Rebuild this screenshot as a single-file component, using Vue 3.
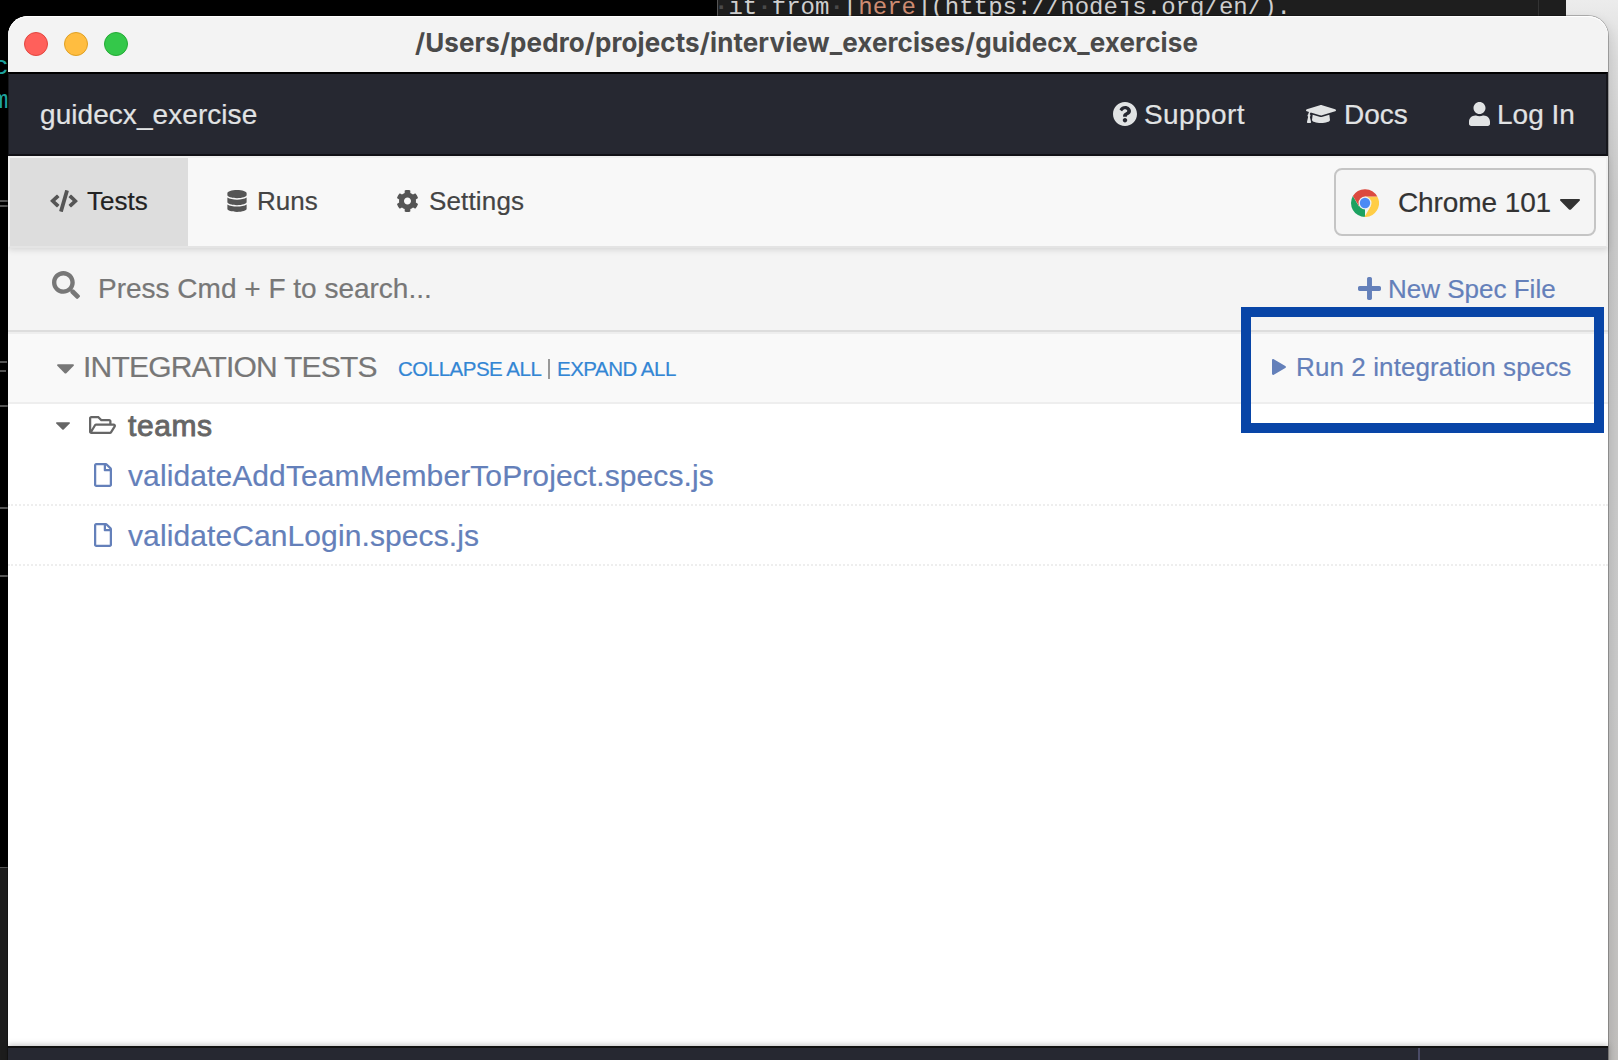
<script setup>
const icons = {
  help: { box: '8 8 496 496', d: 'M504 256c0 136.997-111.043 248-248 248S8 392.997 8 256C8 119.083 119.043 8 256 8s248 111.083 248 248zM262.655 90c-54.497 0-89.255 22.957-116.549 63.758-3.536 5.286-2.353 12.415 2.715 16.258l34.699 26.31c5.205 3.947 12.621 3.008 16.665-2.122 17.864-22.658 30.113-35.797 57.303-35.797 20.429 0 45.698 13.148 45.698 32.958 0 14.976-12.363 22.667-32.534 33.976C247.128 238.528 216 254.941 216 296v4c0 6.627 5.373 12 12 12h56c6.627 0 12-5.373 12-12v-1.333c0-28.462 83.186-29.647 83.186-106.667 0-58.002-60.165-102-116.531-102zM256 338c-25.365 0-46 20.635-46 46 0 25.364 20.635 46 46 46s46-20.636 46-46c0-25.365-20.635-46-46-46z' },
  cap: { box: '0 64 640 384', d: 'M622.34 153.2L343.4 67.5c-15.2-4.67-31.6-4.67-46.79 0L17.66 153.2c-23.54 7.23-23.54 38.36 0 45.59l48.63 14.94c-10.67 13.19-17.23 29.28-17.88 46.9C38.78 266.15 32 276.11 32 288c0 10.78 5.68 19.85 13.86 25.65L20.33 428.53C18.11 438.52 25.71 448 35.94 448h56.11c10.24 0 17.84-9.48 15.62-19.47L82.14 313.65C90.32 307.85 96 298.78 96 288c0-11.57-6.47-21.25-15.66-26.87.76-15.02 8.44-28.3 20.69-36.72L296.6 284.5c9.06 2.78 26.44 6.25 46.79 0l278.95-85.7c23.55-7.24 23.55-38.36 0-45.6zM352.79 315.09c-28.53 8.76-52.84 3.92-65.59 0l-145.02-44.55L128 384c0 35.35 85.96 64 192 64s192-28.65 192-64l-14.18-113.47-145.03 44.56z' },
  user: { box: '0 0 448 512', d: 'M224 256c70.7 0 128-57.3 128-128S294.7 0 224 0 96 57.3 96 128s57.3 128 128 128zm89.6 32h-16.7c-22.2 10.2-46.9 16-72.9 16s-50.6-5.8-72.9-16h-16.7C60.2 288 0 348.2 0 422.4V464c0 26.5 21.5 48 48 48h352c26.5 0 48-21.5 48-48v-41.6c0-74.2-60.2-134.4-134.4-134.4z' },
  code: { box: '0 0 640 512', d: 'M278.9 511.5l-61-17.7c-6.4-1.8-10-8.5-8.2-14.9L346.2 8.7c1.8-6.4 8.5-10 14.9-8.2l61 17.7c6.4 1.8 10 8.5 8.2 14.9L293.8 503.3c-1.9 6.4-8.5 10.1-14.9 8.2zm-114-112.2l43.5-46.4c4.6-4.9 4.3-12.7-.8-17.2L117 256l90.6-79.7c5.1-4.5 5.5-12.3.8-17.2l-43.5-46.4c-4.5-4.8-12.1-5.1-17-.5L3.8 247.2c-5.1 4.7-5.1 12.8 0 17.5l144.1 135.1c4.9 4.6 12.5 4.4 17-.5zm327.2.6l144.1-135.1c5.1-4.7 5.1-12.8 0-17.5L492.1 112.1c-4.8-4.5-12.4-4.3-17 .5L431.6 159c-4.6 4.9-4.3 12.7.8 17.2L523 256l-90.6 79.7c-5.1 4.5-5.5 12.3-.8 17.2l43.5 46.4c4.5 4.9 12.1 5.1 17 .6z' },
  database: { box: '0 0 448 512', d: 'M448 73.143v45.714C448 159.143 347.667 192 224 192S0 159.143 0 118.857V73.143C0 32.857 100.333 0 224 0s224 32.857 224 73.143zM448 176v102.857C448 319.143 347.667 352 224 352S0 319.143 0 278.857V176c48.125 33.143 136.208 48.572 224 48.572S399.874 209.143 448 176zm0 160v102.857C448 479.143 347.667 512 224 512S0 479.143 0 438.857V336c48.125 33.143 136.208 48.572 224 48.572S399.874 369.143 448 336z' },
  cog: { box: '18 8 476 496', d: 'M487.4 315.7l-42.6-24.6c4.3-23.2 4.3-47 0-70.2l42.6-24.6c4.9-2.8 7.1-8.6 5.5-14-11.1-35.6-30-67.8-54.7-94.6-3.8-4.1-10-5.1-14.8-2.3L380.8 110c-17.9-15.4-38.5-27.3-60.8-35.1V25.8c0-5.6-3.9-10.5-9.4-11.7-36.7-8.2-74.3-7.8-109.2 0-5.5 1.2-9.4 6.1-9.4 11.7V75c-22.2 7.9-42.8 19.8-60.8 35.1L88.7 85.5c-4.9-2.8-11-1.9-14.8 2.3-24.7 26.7-43.6 58.9-54.7 94.6-1.7 5.4.6 11.2 5.5 14L67.3 221c-4.3 23.2-4.3 47 0 70.2l-42.6 24.6c-4.9 2.8-7.1 8.6-5.5 14 11.1 35.6 30 67.8 54.7 94.6 3.8 4.1 10 5.1 14.8 2.3l42.6-24.6c17.9 15.4 38.5 27.3 60.8 35.1v49.2c0 5.6 3.9 10.5 9.4 11.7 36.7 8.2 74.3 7.8 109.2 0 5.5-1.2 9.4-6.1 9.4-11.7v-49.2c22.2-7.9 42.8-19.8 60.8-35.1l42.6 24.6c4.9 2.8 11 1.9 14.8-2.3 24.7-26.7 43.6-58.9 54.7-94.6 1.5-5.5-.7-11.3-5.6-14.1zM256 336c-44.1 0-80-35.9-80-80s35.9-80 80-80 80 35.9 80 80-35.9 80-80 80z' },
  search: { box: '0 0 512 512', d: 'M505 442.7L405.3 343c-4.5-4.5-10.6-7-17-7H372c27.6-35.3 44-79.7 44-128C416 93.1 322.9 0 208 0S0 93.1 0 208s93.1 208 208 208c48.3 0 92.7-16.4 128-44v16.3c0 6.4 2.5 12.5 7 17l99.7 99.7c9.4 9.4 24.6 9.4 33.9 0l28.3-28.3c9.4-9.4 9.4-24.6.1-34zM208 336c-70.7 0-128-57.2-128-128 0-70.7 57.2-128 128-128 70.7 0 128 57.2 128 128 0 70.7-57.2 128-128 128z' },
  plus: { box: '0 32 448 448', d: 'M416 208H272V64c0-17.67-14.33-32-32-32h-32c-17.67 0-32 14.33-32 32v144H32c-17.67 0-32 14.33-32 32v32c0 17.67 14.33 32 32 32h144v144c0 17.67 14.33 32 32 32h32c17.67 0 32-14.33 32-32V304h144c17.67 0 32-14.33 32-32v-32c0-17.67-14.33-32-32-32z' },
  file: { box: '0 0 384 512', d: 'M369.9 97.9L286 14C277 5 264.8-.1 252.1-.1H48C21.5 0 0 21.5 0 48v416c0 26.5 21.5 48 48 48h288c26.5 0 48-21.5 48-48V131.9c0-12.7-5.1-25-14.1-34zM332.1 128H256V51.9l76.1 76.1zM48 464V48h160v104c0 13.3 10.7 24 24 24h104v288H48z' },
  folder: { box: '0 64 576 384', d: 'M527.9 224H480v-48c0-26.5-21.5-48-48-48H272l-64-64H48C21.5 64 0 85.5 0 112v288c0 26.5 21.5 48 48 48h400c16.5 0 31.9-8.5 40.7-22.6l79.9-128c20-31.9-3-73.4-40.7-73.4zM48 118c0-3.3 2.7-6 6-6h134.1l64 64H426c3.3 0 6 2.7 6 6v42H152c-16.8 0-32.4 8.8-41.1 23.2L48 351.4zm400 282H72l77.2-128H528z' },
  caret: { box: '0 0 20 11', d: 'M1.2 0h17.6c1.1 0 1.5 1 .8 1.8l-8.6 8.6c-.6.6-1.4.6-2 0L.4 1.8C-.3 1 .1 0 1.2 0z' },
  play: { box: '0 0 14 16', d: 'M0 1.2C0 .2 .9-.3 1.8 .2L13.3 7c.9.5.9 1.5 0 2L1.8 15.8C.9 16.3 0 15.8 0 14.8z' }
}

const links = [
  { id: 'support', icon: 'help', label: 'Support' },
  { id: 'docs', icon: 'cap', label: 'Docs' },
  { id: 'login', icon: 'user', label: 'Log In' }
]
const tabs = [
  { id: 'tests', icon: 'code', label: 'Tests' },
  { id: 'runs', icon: 'database', label: 'Runs' },
  { id: 'settings', icon: 'cog', label: 'Settings' }
]
const specs = ['validateAddTeamMemberToProject.specs.js', 'validateCanLogin.specs.js']
</script>

<template>
  <div class="desktop">
    <div class="terminal">
      <span class="glyph c">c</span>
      <span class="glyph m">m</span>
      <i v-for="n in 7" :key="n" :class="['rule', 'r' + n]"></i>
    </div>
    <div class="editor">
      <pre class="source"><b>·</b>it<b>·</b>from<b>·</b>[<em>here</em>](https://nodejs.org/en/).</pre>
      <i class="ruler"></i>
    </div>

    <main class="window">
      <header class="titlebar">
        <div class="lights"><i class="red"></i><i class="amber"></i><i class="green"></i></div>
        <h1><span>/Users/pedro/projects/interview_exercises/guidecx_exercise</span></h1>
      </header>

      <nav class="navbar">
        <span class="project">guidecx_exercise</span>
        <a v-for="l in links" :key="l.id" :class="l.id">
          <svg :viewBox="icons[l.icon].box"><path :d="icons[l.icon].d" /></svg><span>{{ l.label }}</span>
        </a>
      </nav>

      <div class="tabs">
        <a v-for="t in tabs" :key="t.id" :class="['tab', t.id]">
          <svg :viewBox="icons[t.icon].box"><path :d="icons[t.icon].d" /></svg><span>{{ t.label }}</span>
        </a>
        <button class="browser">
          <svg class="chrome" viewBox="0 0 28 28">
            <path fill="#1da261" d="M14 14L14 28A14 14 0 0 1 1.88 7L8 17.5z" />
            <path fill="#ffcd46" d="M14 7.4H26.3A14 14 0 0 1 13.4 28L19.8 17z" />
            <path fill="#db4a3f" d="M1.88 7A14 14 0 0 1 26.3 7.6H14L8 17z" />
            <circle cx="14" cy="14" r="6.5" fill="#f1f1f1" />
            <circle cx="14" cy="14" r="5.2" fill="#4c8bf5" />
          </svg>
          <span>Chrome 101</span>
          <svg class="caret" :viewBox="icons.caret.box"><path :d="icons.caret.d" /></svg>
        </button>
      </div>

      <div class="searchbar">
        <svg class="magnifier" :viewBox="icons.search.box"><path :d="icons.search.d" /></svg>
        <span class="placeholder">Press Cmd + F to search...</span>
        <a class="new-spec">
          <svg :viewBox="icons.plus.box"><path :d="icons.plus.d" /></svg><span>New Spec File</span>
        </a>
      </div>

      <div class="section">
        <svg class="caret" :viewBox="icons.caret.box"><path :d="icons.caret.d" /></svg>
        <span class="heading">INTEGRATION TESTS</span>
        <a class="toggle collapse">COLLAPSE ALL</a><i class="bar"></i><a class="toggle">EXPAND ALL</a>
        <a class="run">
          <svg :viewBox="icons.play.box"><path :d="icons.play.d" /></svg><span>Run 2 integration specs</span>
        </a>
        <div class="highlight"></div>
      </div>

      <div class="list">
        <div class="folder">
          <svg class="caret" :viewBox="icons.caret.box"><path :d="icons.caret.d" /></svg>
          <svg class="open" :viewBox="icons.folder.box"><path :d="icons.folder.d" /></svg>
          <span>teams</span>
        </div>
        <a v-for="s in specs" :key="s" class="spec">
          <svg :viewBox="icons.file.box"><path :d="icons.file.d" /></svg><span>{{ s }}</span>
        </a>
      </div>

      <footer class="footer"><i></i></footer>
    </main>
  </div>
</template>

<style>
html, body { margin: 0; overflow: hidden; }
</style>

<style scoped>
.desktop {
  position: relative;
  width: 1618px;
  height: 1060px;
  overflow: hidden;
  background: linear-gradient(#ececec 0, #dcdcdc 60px, #cbcbcb 200px, #c9c9c9 700px, #c2c0be 1060px);
  font-family: "Liberation Sans", Arial, sans-serif;
}
svg { display: block; flex: none; fill: currentColor; }
span, a, h1 { white-space: nowrap; }
a { display: flex; align-items: center; }

.terminal {
  position: absolute;
  left: 0;
  top: 0;
  width: 717px;
  height: 1060px;
  background: linear-gradient(#000 867px, #1e1e1e 867px);
}
.glyph {
  position: absolute;
  font: 26px/30px "Liberation Mono", monospace;
  color: #1fa5a0;
}
.c { left: -7px; top: 52px; }
.m { left: -7px; top: 86px; }
.rule { position: absolute; left: 0; width: 8px; height: 2px; background: #555; }
.r1 { top: 200px; height: 7px; box-sizing: border-box; border: solid #555; border-width: 2px 0; background: none; }
.r2 { top: 361px; width: 7px; }
.r3 { top: 370px; width: 6px; }
.r4 { top: 405px; }
.r5 { top: 507px; }
.r6 { top: 575px; }
.r7 { top: 867px; height: 1px; }

.editor {
  position: absolute;
  left: 717px;
  top: 0;
  width: 849px;
  height: 40px;
  box-sizing: border-box;
  border-left: 1px solid #555;
  background: #1e1e1e;
}
.source {
  margin: -6px 0 0 -4px;
  font: 24px/28px "Liberation Mono", monospace;
  letter-spacing: .02px;
  color: #cfcfcf;
}
.source b { color: #4a4a4a; }
.source em { font-style: normal; color: #ce8c72; }
.ruler { position: absolute; left: 820px; top: 0; width: 1px; height: 20px; background: #333; }

.window {
  position: absolute;
  left: 8px;
  top: 16px;
  width: 1600px;
  height: 1060px;
  display: flex;
  flex-direction: column;
  border-radius: 20px 20px 0 0;
  background: #fff;
  box-shadow: 0 0 0 1px rgba(0, 0, 0, .25), 2px 4px 12px rgba(0, 0, 0, .12);
  -webkit-text-stroke: .2px;
}

.titlebar {
  flex: none;
  display: flex;
  align-items: center;
  height: 56px;
  border-radius: 20px 20px 0 0;
  background: #f3f3f3;
  box-shadow: inset 0 1px #fff;
}
.lights { display: flex; gap: 16px; margin-left: 16px; }
.lights i { box-sizing: border-box; width: 24px; height: 24px; border-radius: 50%; border: 1px solid; }
.red { background: #ff605b; border-color: #e2463f !important; }
.amber { background: #ffbd40; border-color: #dfa023 !important; }
.green { background: #34c84a; border-color: #24aa35 !important; }
h1 {
  margin: 0 0 2px 287px;
  font: 700 26px/32px Inter, sans-serif;
  letter-spacing: .1px;
  color: #4a4a4a;
  -webkit-text-stroke: 0;
}

.navbar {
  flex: none;
  display: flex;
  align-items: center;
  box-sizing: border-box;
  height: 84px;
  padding-left: 31px;
  border: solid #000;
  border-width: 2px 2px 2px 1px;
  border-color: #000 #16171c #121217 #16171c;
  background: #262831;
  font-size: 28px;
  color: #e1e3e4;
}
.navbar span { padding-top: 2px; }
.project { flex: 1; letter-spacing: .06px; }
.support { width: 193px; letter-spacing: .4px; }
.support svg { width: 24px; height: 24px; margin-right: 7px; }
.docs { width: 163px; }
.docs svg { width: 30px; height: 18px; margin-right: 8px; }
.login { width: 137px; }
.login svg { width: 21px; height: 24px; margin-right: 7px; }

.tabs {
  flex: none;
  display: flex;
  box-sizing: border-box;
  height: 92px;
  border: solid #f0f0f0;
  border-width: 2px;
  border-bottom-color: #e4e4e4;
  background: #f8f8f8;
  box-shadow: 0 2px 6px rgba(0, 0, 0, .12);
  position: relative;
  font-size: 26px;
  color: #444;
}
.tab { box-sizing: border-box; height: 88px; padding-bottom: 2px; }
.tab svg { fill: #555; }
.tests { width: 178px; padding-left: 40px; background: #ddd; color: #222; }
.tests svg { width: 28px; height: 22px; margin-right: 9px; }
.runs { width: 169px; padding-left: 39px; }
.runs svg { width: 20px; height: 22px; margin-right: 10px; }
.settings { padding-left: 40px; letter-spacing: .15px; }
.settings svg { width: 21px; height: 22px; margin-right: 11px; }
.browser {
  display: flex;
  align-items: center;
  box-sizing: border-box;
  width: 262px;
  height: 68px;
  margin: 10px 10px 0 auto;
  padding: 0 0 0 15px;
  border: 2px solid #c5c5c5;
  border-radius: 8px;
  background: #f5f5f5;
  font: 28px/34px "Liberation Sans", Arial, sans-serif;
  color: #333;
}
.chrome { width: 28px; height: 28px; margin: 2px 19px 0 0; }
.browser span { width: 162px; padding-top: 2px; text-align: left; letter-spacing: -.1px; }
.browser .caret { width: 20px; height: 11px; margin-top: 5px; }

.searchbar {
  flex: none;
  display: flex;
  align-items: center;
  height: 82px;
  background: #f4f4f4;
  font-size: 28px;
  color: #777;
}
.magnifier { width: 28px; height: 28px; margin: 0 18px 8px 44px; }
.new-spec { width: 201px; margin: 0 49px 0 auto; font-size: 26px; color: #6480ba; }
.new-spec svg { width: 23px; height: 23px; margin: 0 7px 2px 0; }

.section {
  flex: none;
  position: relative;
  display: flex;
  align-items: center;
  box-sizing: border-box;
  height: 74px;
  border-top: 2px solid #ddd;
  border-bottom: 2px solid #eee;
  box-shadow: inset 0 2px #eee;
  background: #f9f9f9;
  color: #777;
}
.section > .caret { width: 17px; height: 10px; margin: 4px 9px 0 49px; }
.heading { width: 315px; font-size: 30px; letter-spacing: -.8px; }
.toggle { font-size: 20.5px; letter-spacing: -.5px; color: #3386d4; padding-top: 3px; }
.collapse { width: 150px; }
.bar { width: 2px; height: 20px; margin: 3px 7px 0 0; background: #999; }
.run { width: 302px; margin: 0 34px 0 auto; font-size: 26px; letter-spacing: .1px; color: #6480ba; }
.run svg { width: 14px; height: 16px; margin-right: 10px; }
.highlight {
  position: absolute;
  left: 1233px;
  top: -25px;
  box-sizing: border-box;
  width: 363px;
  height: 126px;
  border: 10px solid #0845a7;
}

.list { flex: none; display: flex; flex-direction: column; height: 642px; font-size: 30px; }
.folder { flex: none; display: flex; align-items: center; height: 42px; color: #666; }
.folder .caret { width: 14px; height: 8px; margin: 2px 19px 0 48px; }
.open { width: 27px; height: 18px; margin-right: 12px; }
.folder span { padding-top: 2px; -webkit-text-stroke: .9px #666; letter-spacing: .6px; }
.spec { flex: none; height: 58px; border-bottom: 2px dotted #eee; padding-left: 86px; color: #6480ba; letter-spacing: .1px; }
.spec span { padding-top: 2px; }
.spec svg { width: 18px; height: 24px; margin-right: 16px; }

.footer {
  flex: none;
  height: 30px;
  border-top: 2px solid #111;
  background: #262831;
  box-shadow: 0 -1px 6px rgba(0, 0, 0, .25);
}
.footer i { display: block; width: 2px; height: 30px; margin-left: 1410px; background: #4a4b66; }
</style>
